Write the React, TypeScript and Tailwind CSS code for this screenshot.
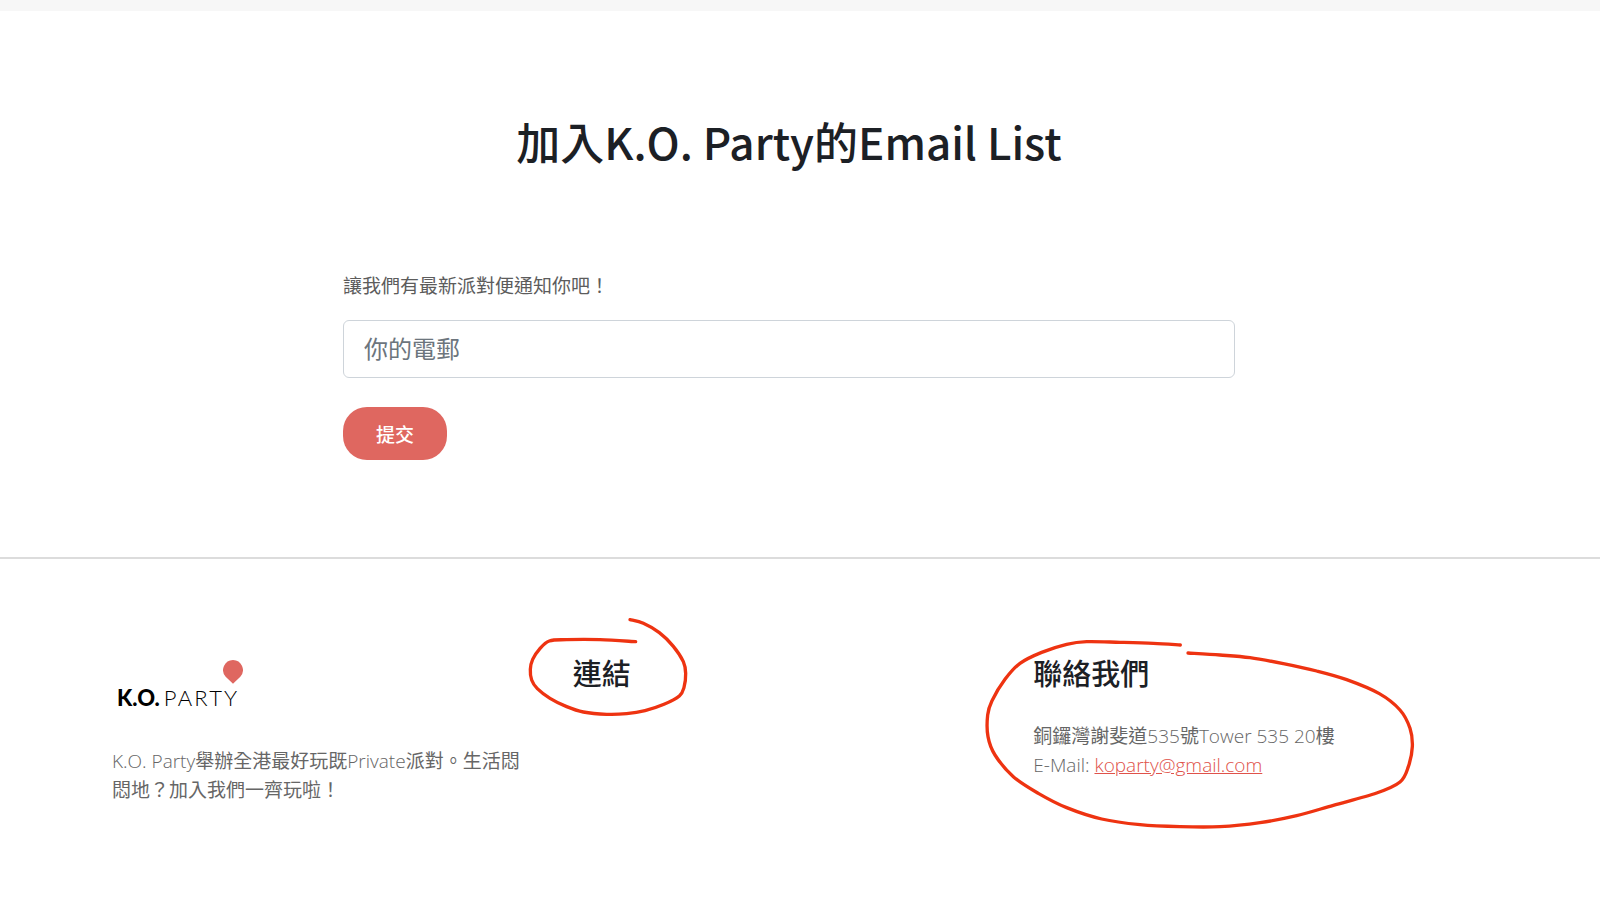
type Point = [number, number];

const logoFont = 'font-[Lato,sans-serif]';

const linksLoop: Point[] = [
[390, 59], [430, 70], [478, 98], [520, 139], [550, 185], [557, 220], [552, 262], [538, 288],
[492, 313], [435, 332], [380, 341], [320, 343], [250, 336], [200, 320], [150, 295], [112, 266],
[95, 240], [91, 208], [98, 178], [118, 148], [148, 123], [200, 119], [300, 119], [407, 125],
];

const contactLoop: Point[] = [
[661, 75], [580, 70], [480, 67], [380, 65], [320, 73], [245, 97], [180, 130], [135, 178],
[96, 242], [83, 285], [84, 350], [105, 405], [160, 470], [235, 520], [320, 563], [425, 597],
[540, 614], [660, 620], [780, 620], [900, 608], [1010, 587], [1120, 556], [1250, 519], [1320, 486],
[1345, 440], [1357, 380], [1350, 325], [1320, 270], [1258, 221], [1160, 179], [1070, 153],
[970, 131], [870, 113], [780, 105], [684, 99],
];

// Joins the points with cubic curves so the stroke runs smoothly through each one
function smoothPath(points: Point[]) {
let d = `M${points[0][0]} ${points[0][1]}`;
for (let i = 0; i < points.length - 1; i++) {
const a = points[i - 1] || points[i];
const b = points[i];
const c = points[i + 1];
const e = points[i + 2] || c;
d += `C${b[0] + (c[0] - a[0]) / 6} ${b[1] + (c[1] - a[1]) / 6} ${c[0] - (e[0] - b[0]) / 6} ${c[1] - (e[1] - b[1]) / 6} ${c[0]} ${c[1]}`;
}
return d;
}

function Scribble({ viewBox, className, points }: { viewBox: string; className: string; points: Point[] }) {
return (
<svg viewBox={viewBox} className={`pointer-events-none absolute max-w-none ${className}`} fill="none" aria-hidden="true">
<path d={smoothPath(points)} stroke="#ee3311" strokeWidth="10" strokeLinecap="round" strokeLinejoin="round" />
</svg>
);
}

function Logo() {
return (
<a href="#" aria-label="K.O. Party" className="relative flex w-fit items-baseline gap-1 pt-7 pl-[5px] text-black">
<svg viewBox="0 0 60 72" className="absolute top-1 right-0 h-6 w-5" aria-hidden="true">
<path d="M30 0a30 30 0 0 1 22 50L30 71 8 50A30 30 0 0 1 30 0z" fill="#df6760" />
</svg>
<span className={`${logoFont} text-[22px] leading-7 font-black`}>K.O.</span>
<span className={`${logoFont} pr-1 text-[22px] leading-7 font-light tracking-widest`}>PARTY</span>
</a>
);
}

function SignupForm() {
return (
<section className="pt-[98px] pr-[46px] pb-[97px] pl-6">
<h1 className="text-center text-[44px] leading-[64px] font-medium text-[#1c2025]">
加入K.O. Party的Email List
</h1>
<form className="mx-auto mt-[97px] max-w-[892px]" onSubmit={e => e.preventDefault()}>
<label htmlFor="email" className="block text-[19px] leading-[29px] text-[#5c5c5c]">
讓我們有最新派對便通知你吧！
</label>
<input
id="email"
type="email"
placeholder="你的電郵"
className="mt-[21px] block h-[58px] w-full rounded-md border border-[#ced4da] bg-white px-5 pb-1 text-2xl text-[#495057] placeholder:text-[#6c757d]"
/>
<button
type="submit"
className="mt-[29px] h-[53px] rounded-3xl bg-[#df6760] px-[33px] text-[19px] leading-[29px] font-medium text-white"
>
提交
</button>
</form>
</section>
);
}

function Footer() {
return (
<footer className="border-t-2 border-[#dcdcdc] pt-[97px] pr-[30px] pb-28 font-['Open_Sans','Noto_Sans_CJK_TC',sans-serif] text-[19px] leading-[29px] text-[#666666]">
<div className="mx-auto grid max-w-[1346px] grid-cols-3 gap-9">
<div>
<Logo />
<p className="mt-[35px]">
<span className="font-light">K.O. Party</span>舉辦全港最好玩既<span className="font-light">Private</span>派對。生活悶<br className="hidden lg:inline" />悶地？加入我們一齊玩啦！
</p>
</div>
<div className="relative">
<h2 className="text-[29px] leading-9 font-medium text-[#1c2025]">連結</h2>
<Scribble viewBox="81 48 486 306" className="-top-10 -left-[46px] h-[102px] w-[162px]" points={linksLoop} />
</div>
<div className="relative">
<h2 className="text-[29px] leading-9 font-medium text-[#1c2025]">聯絡我們</h2>
<address className="mt-[30px] not-italic">
銅鑼灣謝斐道<span className="font-light">535</span>號<span className="font-light">Tower 535 20</span>樓
<br />
<span className="font-light">E-Mail: </span>
<a href="mailto:koparty@gmail.com" className="font-light text-[#e0524a] underline">koparty@gmail.com</a>
</address>
<Scribble viewBox="72 48 1296 588" className="-top-5 -left-[49px] h-[196px] w-[432px]" points={contactLoop} />
</div>
</div>
</footer>
);
}

export default function App() {
return (
<div className="min-h-screen bg-white font-['Noto_Sans_CJK_TC',sans-serif]" lang="zh-Hant">
<div className="h-[11px] bg-[#f7f7f7]" />
<main>
<SignupForm />
</main>
<Footer />
</div>
);
}
